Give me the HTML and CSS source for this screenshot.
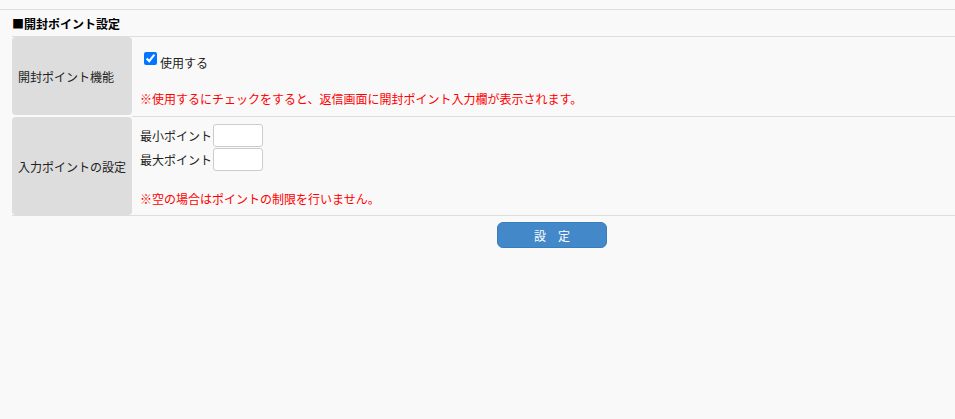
FILE: index.html
```html
<!DOCTYPE html>
<html lang="ja">
<head>
    <meta charset="UTF-8">
    <meta name="viewport" content="width=device-width, initial-scale=1.0">
    <title>開封ポイント設定</title>
    <link rel="stylesheet" href="styles.css">
</head>
<body>
    <div class="page">
        <h2 class="section-title">■開封ポイント設定</h2>
        <div class="form-table">
            <div class="row row-first">
                <div class="row-label">開封ポイント機能</div>
                <div class="row-body">
                    <label class="check-line"><input type="checkbox" checked><span>使用する</span></label>
                    <p class="note">※使用するにチェックをすると、返信画面に開封ポイント入力欄が表示されます。</p>
                </div>
            </div>
            <div class="row">
                <div class="row-label">入力ポイントの設定</div>
                <div class="row-body">
                    <div class="point-line"><span>最小ポイント</span><input type="text" class="point-input"></div>
                    <div class="point-line"><span>最大ポイント</span><input type="text" class="point-input"></div>
                    <p class="note note-points">※空の場合はポイントの制限を行いません。</p>
                </div>
            </div>
        </div>
        <div class="actions">
            <button class="submit-btn">設　定</button>
        </div>
    </div>
</body>
</html>
```

FILE: styles.css
```css
* {
    font-family: "Noto Sans CJK JP", "Noto Sans", sans-serif;
}
body {
    margin: 0;
    background: #f9f9f9;
    color: #222;
    font-size: 12px;
}
.page {
    margin-top: 9px;
    border-top: 1px solid #dedede;
}
.section-title {
    margin: 0;
    padding: 2px 0 0 12px;
    height: 24px;
    line-height: 24px;
    font-size: 12px;
    font-weight: bold;
    color: #000;
}
.form-table {
    margin-left: 12px;
    border-top: 1px solid #dedede;
    border-bottom: 1px solid #dedede;
}
.row {
    display: flex;
}
.row-label {
    width: 114px;
    padding-left: 6px;
    background: #dddddd;
    border-radius: 4px;
    display: flex;
    align-items: center;
    flex-shrink: 0;
}
.row-first .row-label {
    margin-bottom: 2px;
}
.row-body {
    flex: 1;
    padding: 7px 8px 7px 8px;
}
.row-first .row-body {
    padding: 15px 8px 8px 8px;
    border-bottom: 1px solid #dedede;
}
.check-line {
    display: flex;
    align-items: flex-start;
}
.check-line input {
    width: 13px;
    height: 13px;
    margin: 0 3px 0 4px;
}
.check-line span {
    margin-top: 2px;
    line-height: 18px;
}
.note {
    margin: 18px 0 0 0;
    line-height: 18px;
    color: #ff0000;
}
.note-points {
    margin-top: 19px;
}
.point-line {
    display: flex;
    align-items: center;
    height: 23px;
    margin-bottom: 1px;
}
.point-input {
    width: 50px;
    height: 23px;
    margin-left: 1px;
    box-sizing: border-box;
    border: 1px solid #cccccc;
    border-radius: 3px;
    background: #fff;
    padding: 2px 4px;
}
.actions {
    padding: 6px 0 0 497px;
}
.submit-btn {
    width: 110px;
    height: 26px;
    border: 1px solid #3b7cbd;
    border-radius: 6px;
    background: #4388c9;
    color: #fff;
    font-size: 12px;
    cursor: pointer;
}
```
